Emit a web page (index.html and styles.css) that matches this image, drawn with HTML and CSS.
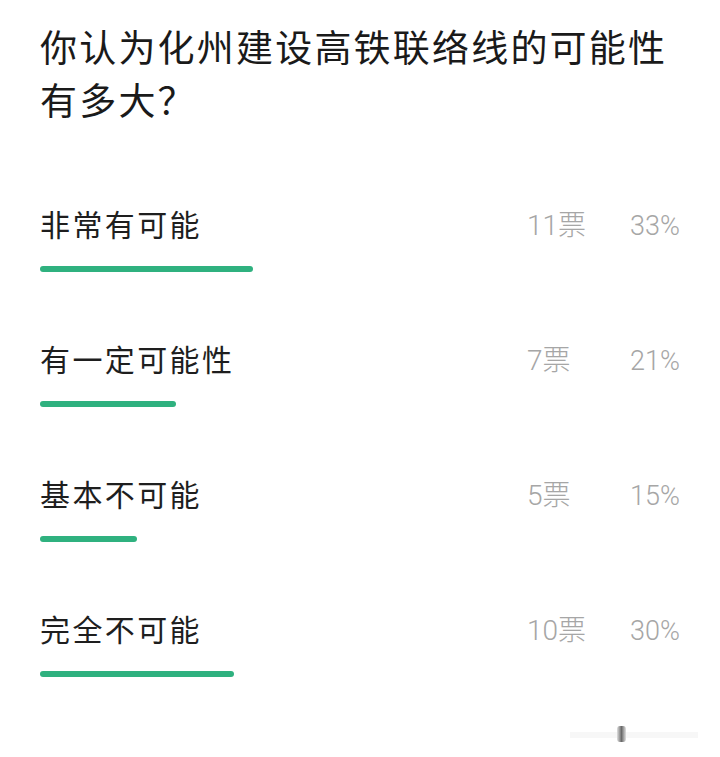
FILE: index.html
```html
<!DOCTYPE html>
<html lang="zh">
<head>
<meta charset="utf-8">
<meta name="viewport" content="width=device-width, initial-scale=1.0">
  <link rel="stylesheet" href="styles.css">
</head>
<body>

  <div id="poll">
    <h1 class="poll-title">你认为化州建设高铁联络线的可能性有多大？</h1>
    <div id="options"></div>
  </div>

  <div class="watermark"><span class="mark-line"></span><span class="mark-dot"></span></div>

  <script>
    const options = [
      { name: "非常有可能", votes: 11 },
      { name: "有一定可能性", votes: 7 },
      { name: "基本不可能", votes: 5 },
      { name: "完全不可能", votes: 10 }
    ];

    const total = options.reduce((sum, o) => sum + o.votes, 0);

    options.forEach(item => {
      const pct = item.votes / total * 100;

      const row = document.createElement('div');
      row.classList.add('option');

      const head = document.createElement('div');
      head.classList.add('option-head');

      const label = document.createElement('div');
      label.classList.add('option-name');
      label.textContent = item.name;

      const stats = document.createElement('div');
      stats.classList.add('option-stats');

      const count = document.createElement('div');
      count.classList.add('option-count');
      count.textContent = item.votes + '票';

      const percent = document.createElement('div');
      percent.classList.add('option-pct');
      percent.textContent = Math.round(pct) + '%';

      stats.appendChild(count);
      stats.appendChild(percent);
      head.appendChild(label);
      head.appendChild(stats);

      const track = document.createElement('div');
      track.classList.add('option-track');
      const bar = document.createElement('div');
      bar.classList.add('option-bar');
      bar.style.width = pct + '%';
      track.appendChild(bar);

      row.appendChild(head);
      row.appendChild(track);
      document.getElementById('options').appendChild(row);
    });
  </script>
</body>
</html>
```

FILE: styles.css
```css
body {
  margin: 0;
  background-color: #ffffff;
  font-family: "Noto Sans CJK SC", "Noto Sans", sans-serif;
  color: #222222;
}

#poll {
  padding: 20px 40px 0 40px;
}

.poll-title {
  margin: 0;
  font-size: 37px;
  font-weight: normal;
  line-height: 53px;
  letter-spacing: 2.2px;
  color: #1a1a1a;
}

#options {
  margin-top: 77px;
}

.option {
  height: 135px;
}

.option-head {
  display: flex;
  align-items: center;
  height: 40px;
}

.option-name {
  flex: 1;
  font-size: 30px;
  letter-spacing: 2.4px;
  color: #1e1e1e;
}

.option-stats {
  display: flex;
  align-items: baseline;
  font-family: Roboto, "Noto Sans CJK SC", sans-serif;
  font-weight: 300;
  color: #a6a6a6;
}

.option-count {
  width: 96px;
  font-size: 28px;
}

.option-pct {
  width: 57px;
  font-size: 27px;
  text-align: right;
}

.option-track {
  margin-top: 23px;
  height: 6px;
}

.option-bar {
  height: 6px;
  border-radius: 3px;
  background-color: #2fb17f;
}

.watermark {
  position: absolute;
  left: 570px;
  top: 726px;
  width: 128px;
  height: 16px;
}

.mark-line {
  position: absolute;
  left: 0;
  top: 6px;
  width: 128px;
  height: 6px;
  background-color: #f7f7f7;
}

.mark-dot {
  position: absolute;
  left: 47px;
  top: 0;
  width: 9px;
  height: 16px;
  border-radius: 3px;
  background: linear-gradient(to right, #e0e0e0, #6a6a6a, #e0e0e0);
}
```
